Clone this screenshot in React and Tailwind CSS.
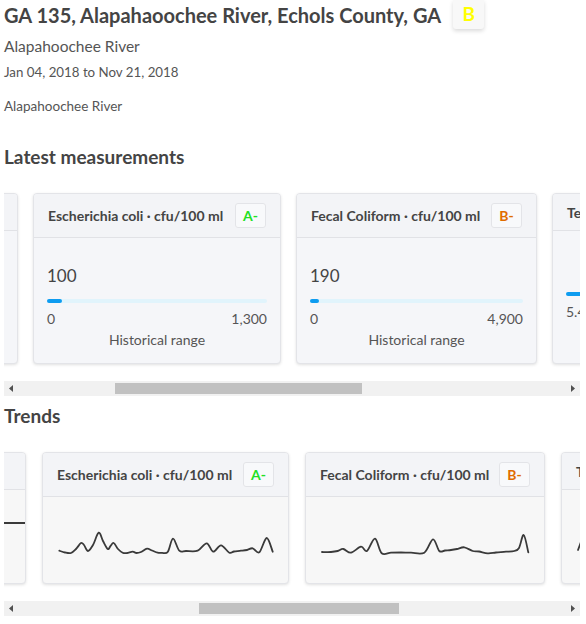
import React from "react";

const FONT = "font-['Lato','Open_Sans',sans-serif]";

function Grade({ g, color }) {
  return (
    <div
      className="w-[31px] h-[25px] flex items-center justify-center rounded-[3px] border border-[#e3e4e8] bg-[#f8f9fb] text-[14px] font-bold"
      style={{ color }}
    >
      {g}
    </div>
  );
}

function CardHeader({ title, grade, color }) {
  return (
    <div
      className={
        "flex items-center justify-between px-[14px] border-b border-[#e1e2e6] bg-[#f3f4f7] " +
        (grade ? "h-[44px]" : "h-[37px]")
      }
    >
      <div className="text-[14px] font-bold text-[#444] whitespace-nowrap">{title}</div>
      {grade && <Grade g={grade} color={color} />}
    </div>
  );
}

function MeasureCard({ w, title, grade, color, value, min, max, pct, noValue }) {
  return (
    <div
      className="shrink-0 h-[171px] rounded-[4px] border border-[#e3e4e8] bg-[#f5f6f9] shadow-[0_1px_3px_rgba(0,0,0,0.12)] overflow-hidden"
      style={{ width: w }}
    >
      <CardHeader title={title} grade={grade} color={color} />
      <div className={"px-[13px] " + (noValue ? "pt-[61px]" : "pt-[26px]")}>
        {!noValue && <div className="text-[17px] leading-[24px] text-[#444]">{value}</div>}
        <div className={"h-[4px] rounded-full bg-[#e1f4fc] " + (noValue ? "" : "mt-[11px]")}>
          <div className="h-[4px] rounded-full bg-[#0e9cf0]" style={{ width: pct }} />
        </div>
        <div className="mt-[7px] flex justify-between text-[14px] leading-[18px] text-[#555]">
          <span>{min}</span>
          <span>{max}</span>
        </div>
        <div className="mt-[3px] text-center text-[14px] leading-[18px] text-[#555]">Historical range</div>
      </div>
    </div>
  );
}

function smooth(pts) {
  if (pts.length < 2) return "";
  let d = `M${pts[0][0].toFixed(1)},${pts[0][1].toFixed(1)}`;
  for (let i = 0; i < pts.length - 1; i++) {
    const p0 = pts[i - 1] || pts[i];
    const p1 = pts[i];
    const p2 = pts[i + 1];
    const p3 = pts[i + 2] || p2;
    const t = 6;
    const c1x = p1[0] + (p2[0] - p0[0]) / t;
    const c1y = p1[1] + (p2[1] - p0[1]) / t;
    const c2x = p2[0] - (p3[0] - p1[0]) / t;
    const c2y = p2[1] - (p3[1] - p1[1]) / t;
    d += ` C${c1x.toFixed(1)},${c1y.toFixed(1)} ${c2x.toFixed(1)},${c2y.toFixed(1)} ${p2[0].toFixed(1)},${p2[1].toFixed(1)}`;
  }
  return d;
}

function TrendCard({ w, title, grade, color, d }) {
  return (
    <div
      className="shrink-0 h-[132px] rounded-[4px] border border-[#e3e4e8] bg-[#f7f7f7] shadow-[0_1px_3px_rgba(0,0,0,0.12)] overflow-hidden flex flex-col"
      style={{ width: w }}
    >
      <CardHeader title={title} grade={grade} color={color} />
      <div className="relative flex-1">
        <svg className="absolute inset-0" width={w} height="95">
          {d && (
            <path
              d={d}
              fill="none"
              stroke="#3a3a3a"
              strokeWidth="1.8"
              strokeLinejoin="round"
              strokeLinecap="round"
            />
          )}
        </svg>
      </div>
    </div>
  );
}

function Scrollbar({ left, width }) {
  return (
    <div className="ml-[4px] w-[576px] h-[15px] bg-[#f1f1f1] relative">
      <div className="absolute top-[2px] h-[11px] bg-[#c1c1c1]" style={{ left, width }} />
      <svg className="absolute left-[4px] top-[4px]" width="6" height="7" viewBox="0 0 6 7">
        <polygon points="5,0 5,7 1,3.5" fill="#505050" />
      </svg>
      <svg className="absolute right-[4px] top-[4px]" width="6" height="7" viewBox="0 0 6 7">
        <polygon points="1,0 1,7 5,3.5" fill="#505050" />
      </svg>
    </div>
  );
}

const ecoliPts = [
  [58.3, 550.7], [64, 552.5], [70, 553], [75, 549], [80, 543], [83, 545], [87, 551], [92, 545], [97.7, 532.7],
  [102, 541], [106.7, 549], [109.5, 546], [112.7, 543], [117, 549], [121.7, 552.7], [126, 553], [131.7, 551.7],
  [135.5, 553], [140, 552], [146, 548.7], [151, 550.5], [156.7, 552.7], [161, 552.8], [166.7, 552],
  [172, 538.7], [178.3, 550.7], [185, 551], [196.7, 550.7], [205.7, 543.3],
  [212.3, 551.7], [220, 545.3], [228.3, 552.7], [233, 551.5], [240, 550.7], [246, 550],
  [251.7, 548.3], [258.3, 552.3], [265.7, 538], [271.7, 551.7],
].map(([x, y]) => [x - 42, y - 497]);

const fecalPts = [
  [321, 552], [330, 552], [336.7, 551], [342.3, 549], [350, 552.7], [360, 546.7],
  [366, 551], [374, 538.7], [380.7, 553.3], [390, 552.7],
  [400, 552.5], [410, 552.7], [423.3, 552.7], [432, 539.3], [438.3, 551], [444, 550.5],
  [450, 550], [456, 549], [463.3, 547.3], [471.7, 551], [478, 551.5], [486.7, 553.3], [495, 552.5],
  [505, 551.7], [513.3, 551], [518, 548], [522.7, 535], [527.3, 552.3],
].map(([x, y]) => [x - 305, y - 497]);

export default function App() {
  return (
    <div className={"w-[586px] bg-white text-[#444] " + FONT}>
      <div className="flex items-start pl-[4px]">
        <h1 className="text-[20px] leading-[30px] font-bold text-[#444] whitespace-nowrap">
          GA 135, Alapahaoochee River, Echols County, GA
        </h1>
        <div className="ml-[12px] w-[31px] h-[29px] flex items-center justify-center bg-[#f8f8f8] rounded-b-[3px] shadow-[0_2px_4px_rgba(0,0,0,0.15)] text-[19px] font-bold text-[#ffff00]">
          B
        </div>
      </div>
      <div className="pl-[4px] mt-[6px] text-[15.5px] leading-[20px] text-[#555]">Alapahoochee River</div>
      <div className="pl-[4px] mt-[7px] text-[13.3px] leading-[18px] text-[#555]">Jan 04, 2018 to Nov 21, 2018</div>
      <div className="pl-[4px] mt-[16px] text-[13.5px] leading-[18px] text-[#555]">Alapahoochee River</div>

      <h2 className="pl-[4px] mt-[30px] text-[19px] leading-[24px] font-bold text-[#444]">Latest measurements</h2>
      <div className="ml-[4px] mt-[20px] w-[576px] overflow-hidden pt-[4px] pb-[17px]">
        <div className="flex gap-[15px] ml-[-226px]">
          <MeasureCard w={240} title="Dissolved Oxygen · mg/L" value="7.2" min="0" max="12" pct="60%" />
          <MeasureCard w={248} title="Escherichia coli · cfu/100 ml" grade="A-" color="#22e022" value="100" min="0" max="1,300" pct="7%" />
          <MeasureCard w={241} title="Fecal Coliform · cfu/100 ml" grade="B-" color="#e06c00" value="190" min="0" max="4,900" pct="4%" />
          <MeasureCard w={240} title="Temperature · °C" value="" min="5.4" max="30" pct="60%" noValue />
        </div>
      </div>
      <Scrollbar left={111} width={247} />

      <h2 className="pl-[4px] mt-[8px] text-[19px] leading-[24px] font-bold text-[#444]">Trends</h2>
      <div className="ml-[4px] mt-[20px] w-[576px] overflow-hidden pt-[4px] pb-[17px]">
        <div className="flex gap-[16px] ml-[-218px]">
          <TrendCard w={240} title="Dissolved Oxygen · mg/L" d="M150,33 L238,33" />
          <TrendCard w={247} title="Escherichia coli · cfu/100 ml" grade="A-" color="#22e022" d={smooth(ecoliPts)} />
          <TrendCard w={240} title="Fecal Coliform · cfu/100 ml" grade="B-" color="#e06c00" d={smooth(fecalPts)} />
          <TrendCard w={240} title="Temperature · °C" d="M16,60 L19,52 L22,56" />
        </div>
      </div>
      <Scrollbar left={195} width={200} />
      <div className="h-[8px]" />
    </div>
  );
}
